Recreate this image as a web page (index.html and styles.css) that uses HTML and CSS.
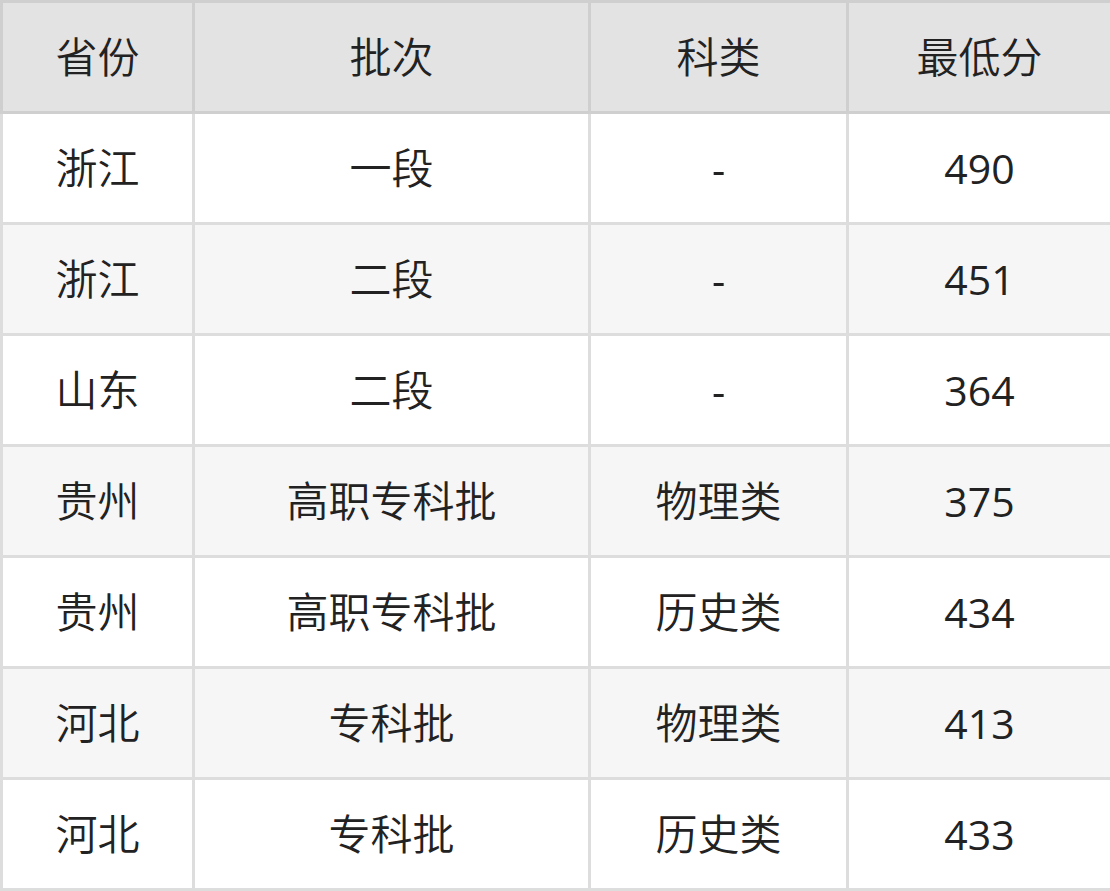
FILE: index.html
```html
<!DOCTYPE html>
<html lang="zh">
<head>
<meta charset="utf-8">
<link rel="stylesheet" href="styles.css">
</head>
<body>
<table class="score-table">
  <colgroup>
    <col class="c1"><col class="c2"><col class="c3"><col class="c4">
  </colgroup>
  <thead>
    <tr><th>省份</th><th>批次</th><th>科类</th><th>最低分</th></tr>
  </thead>
  <tbody>
    <tr><td>浙江</td><td>一段</td><td class="num">-</td><td class="num">490</td></tr>
    <tr><td>浙江</td><td>二段</td><td class="num">-</td><td class="num">451</td></tr>
    <tr><td>山东</td><td>二段</td><td class="num">-</td><td class="num">364</td></tr>
    <tr><td>贵州</td><td>高职专科批</td><td>物理类</td><td class="num">375</td></tr>
    <tr><td>贵州</td><td>高职专科批</td><td>历史类</td><td class="num">434</td></tr>
    <tr><td>河北</td><td>专科批</td><td>物理类</td><td class="num">413</td></tr>
    <tr><td>河北</td><td>专科批</td><td>历史类</td><td class="num">433</td></tr>
  </tbody>
</table>
</body>
</html>
```

FILE: styles.css
```css
html, body {
  margin: 0;
  padding: 0;
  background: #ffffff;
}
.score-table {
  width: 1110px;
  border-collapse: collapse;
  table-layout: fixed;
  font-family: "Open Sans", "Noto Sans CJK SC", sans-serif;
  font-size: 42px;
  color: #222222;
}
.c1 { width: 192px; }
.c2 { width: 396px; }
.c3 { width: 258px; }
.c4 { width: 264px; }
.score-table th,
.score-table td {
  height: 108px;
  padding: 0;
  text-align: center;
  vertical-align: middle;
  font-weight: 350;
  line-height: 1;
}
.score-table td.num {
  font-weight: 400;
  font-size: 41px;
}
.score-table th {
  background: #e3e3e3;
  border: 3px solid #cfcfcf;
}
.score-table td {
  border: 3px solid #dddddd;
}
.score-table tbody tr:nth-child(even) td {
  background: #f6f6f6;
}
```
